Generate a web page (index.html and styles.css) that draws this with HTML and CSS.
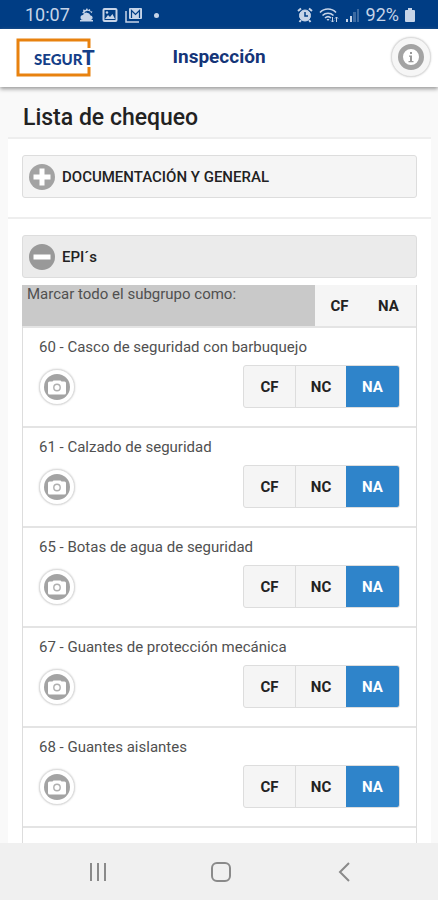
FILE: index.html
```html
<!DOCTYPE html>
<html lang="es">
<head>
<meta charset="utf-8">
<meta name="viewport" content="width=device-width, initial-scale=1">
<title>Inspección</title>
<link rel="stylesheet" href="styles.css">
</head>
<body>
<svg class="defs" aria-hidden="true">
  <symbol id="camera" viewBox="0 0 26 26">
    <circle cx="13" cy="13" r="13" fill="#a3a3a3"/>
    <path d="M5.500 7.500h3l1-1h7l1 1h3a1.500 1.500 0 0 1 1.500 1.500v10a1.500 1.500 0 0 1-1.500 1.500h-15A1.500 1.500 0 0 1 4 19V9a1.500 1.500 0 0 1 1.500-1.500z" fill="#fff"/>
    <circle cx="13" cy="13.500" r="3.200" fill="none" stroke="#b0b0b0" stroke-width="1.400"/>
  </symbol>
</svg>
<div class="status">
  <div class="status-group">
    <span class="clock">10:07</span>
    <svg width="16" height="16" viewBox="0 0 16 16" fill="#c6d4e8" aria-hidden="true">
      <path d="M8 1l1 2 2-1 .3 2.200 2.200.3-1 1.800A4 4 0 0 0 5 6.500L3 6l1.300-1.500L4 2.500l2.500.6z"/>
      <path d="M4 13a2.500 2.500 0 0 1 0-5 4 4 0 0 1 7.500.5A2.300 2.300 0 0 1 12 13z"/>
      <path d="M1 13h13v1.500H1z"/>
    </svg>
    <svg width="16" height="16" viewBox="0 0 16 16" aria-hidden="true">
      <rect x="1.500" y="2" width="13" height="12" rx="1" fill="none" stroke="#c6d4e8" stroke-width="2"/>
      <path d="M3 12l3-4 2 2 2.500-3L13 12z" fill="#c6d4e8"/><circle cx="5" cy="5.500" r="1.200" fill="#c6d4e8"/>
    </svg>
    <svg width="18" height="16" viewBox="0 0 18 16" fill="none" stroke="#c6d4e8" aria-hidden="true">
      <path d="M1 4v11h13" stroke-width="1.500"/>
      <rect x="4" y="1" width="13" height="11" rx="1" fill="#c6d4e8" stroke="none"/>
      <path d="M6.500 11V3.500l4 4 4-4V11" stroke="#003d84" stroke-width="1.200"/>
    </svg>
    <span class="dot"></span>
  </div>
  <div class="status-group status-right">
    <svg width="16" height="16" viewBox="0 0 16 16" fill="none" stroke="#c6d4e8" aria-hidden="true">
      <circle cx="8" cy="8.500" r="5.500" fill="#c6d4e8"/>
      <path d="M1 4l3-2.500M15 4l-3-2.500M4 13l-1.500 2M12 13l1.500 2" stroke-width="2"/>
      <path d="M8 5v4h3" stroke="#003d84" stroke-width="1.500"/>
    </svg>
    <svg width="20" height="16" viewBox="0 0 20 16" fill="none" stroke="#c6d4e8" stroke-width="1.600" aria-hidden="true">
      <path d="M1 5.500a11 11 0 0 1 16 0M3.500 8.500a8 8 0 0 1 11 0M6 11a4.500 4.500 0 0 1 6 0"/>
      <path d="M9 14l-1.500-2h3z" fill="#c6d4e8" stroke="none"/>
      <path d="M13.500 10v5M12 13.500l1.500 1.500 1.500-1.500M17.500 15v-5M16 11.500l1.500-1.500 1.500 1.500" stroke-width="1"/>
    </svg>
    <svg width="15" height="16" viewBox="0 0 15 16" fill="#c6d4e8" aria-hidden="true">
      <path d="M1 12h2v3H1zM5 9h2v6H5z"/><path d="M8 5h3v10H8zM12 2h2v13h-2z" opacity=".3"/>
    </svg>
    <span class="battery">92%</span>
    <svg width="10" height="16" viewBox="0 0 10 16" fill="#c6d4e8" aria-hidden="true">
      <path d="M3 1h4v2h2a1 1 0 0 1 1 1v10a1 1 0 0 1-1 1H1a1 1 0 0 1-1-1V4a1 1 0 0 1 1-1h2z"/>
    </svg>
  </div>
</div>

<header class="topbar">
  <a class="logo" href="#" aria-label="SEGURT">
    <svg width="80" height="40" viewBox="0 0 80 40">
      <path d="M73 11V3H2v35h71v-8" fill="none" stroke="#e8820f" stroke-width="3"/>
      <text class="logo-text" x="18" y="28">SEGUR</text>
      <text class="logo-t" x="66" y="28">T</text>
    </svg>
  </a>
  <h1 class="title">Inspección</h1>
  <button class="round info" type="button" aria-label="Información">
    <svg width="26" height="26" viewBox="0 0 26 26">
      <circle cx="13" cy="13" r="10.500" fill="#fff" stroke="#a3a3a3" stroke-width="5"/>
      <path d="M12 8h2v2h-2zM11 11.500h3v5.500h1.500v1.200h-5V17H12v-4.200h-1z" fill="#999"/>
    </svg>
  </button>
</header>

<main class="content">
  <h2 class="heading">Lista de chequeo</h2>
  <section class="group">
    <button class="toggle" type="button" aria-expanded="false">
      <svg width="26" height="26" viewBox="0 0 26 26" aria-hidden="true"><circle cx="13" cy="13" r="13" fill="#a3a3a3"/><path d="M10.500 4.500h5v6h6v5h-6v6h-5v-6h-6v-5h6z" fill="#fff"/></svg>
      DOCUMENTACIÓN Y GENERAL
    </button>
  </section>
  <section class="group">
    <button class="toggle open" type="button" aria-expanded="true">
      <svg width="26" height="26" viewBox="0 0 26 26" aria-hidden="true"><circle cx="13" cy="13" r="13" fill="#999"/><path d="M4.500 10.500h17v5h-17z" fill="#fff"/></svg>
      EPI´s
    </button>
    <div class="panel">
      <div class="mark-all">
        <p class="mark-label">Marcar todo el subgrupo como:</p>
        <div class="mark-options">
          <button type="button">CF</button>
          <button type="button">NA</button>
        </div>
      </div>
      <ul class="items">
        <li class="item">
          <p class="name">60 - Casco de seguridad con barbuquejo</p>
          <div class="actions">
            <button class="round" type="button" aria-label="Foto"><svg width="26" height="26"><use href="#camera"/></svg></button>
            <div class="choices"><button type="button">CF</button><button type="button">NC</button><button class="selected" type="button" aria-pressed="true">NA</button></div>
          </div>
        </li>
        <li class="item">
          <p class="name">61 - Calzado de seguridad</p>
          <div class="actions">
            <button class="round" type="button" aria-label="Foto"><svg width="26" height="26"><use href="#camera"/></svg></button>
            <div class="choices"><button type="button">CF</button><button type="button">NC</button><button class="selected" type="button" aria-pressed="true">NA</button></div>
          </div>
        </li>
        <li class="item">
          <p class="name">65 - Botas de agua de seguridad</p>
          <div class="actions">
            <button class="round" type="button" aria-label="Foto"><svg width="26" height="26"><use href="#camera"/></svg></button>
            <div class="choices"><button type="button">CF</button><button type="button">NC</button><button class="selected" type="button" aria-pressed="true">NA</button></div>
          </div>
        </li>
        <li class="item">
          <p class="name">67 - Guantes de protección mecánica</p>
          <div class="actions">
            <button class="round" type="button" aria-label="Foto"><svg width="26" height="26"><use href="#camera"/></svg></button>
            <div class="choices"><button type="button">CF</button><button type="button">NC</button><button class="selected" type="button" aria-pressed="true">NA</button></div>
          </div>
        </li>
        <li class="item">
          <p class="name">68 - Guantes aislantes</p>
          <div class="actions">
            <button class="round" type="button" aria-label="Foto"><svg width="26" height="26"><use href="#camera"/></svg></button>
            <div class="choices"><button type="button">CF</button><button type="button">NC</button><button class="selected" type="button" aria-pressed="true">NA</button></div>
          </div>
        </li>
      </ul>
    </div>
  </section>
</main>

<nav class="sysnav" aria-label="Sistema">
  <button type="button" aria-label="Recientes"><svg width="20" height="20" viewBox="0 0 20 20" stroke="#8a8a8a" stroke-width="2"><path d="M3 1v18M10 1v18M17 1v18"/></svg></button>
  <button type="button" aria-label="Inicio"><svg width="20" height="20" viewBox="0 0 20 20" fill="none" stroke="#8a8a8a" stroke-width="2"><rect x="1" y="1" width="18" height="18" rx="5"/></svg></button>
  <button type="button" aria-label="Atrás"><svg width="20" height="20" viewBox="0 0 20 20" fill="none" stroke="#8a8a8a" stroke-width="2"><path d="M15 1L6 10l9 9"/></svg></button>
</nav>
</body>
</html>
```
FILE: styles.css
```css
* { box-sizing: border-box; }

body {
  margin: 0;
  height: 100vh;
  display: flex;
  flex-direction: column;
  background: #f9f9f9;
  color: #505050;
  font-family: Roboto, "Liberation Sans", sans-serif;
  font-size: 15px;
  line-height: 20px;
}

h1, h2, p, ul { margin: 0; padding: 0; }
ul { list-style: none; }
svg { display: block; flex: none; }
.defs { position: absolute; width: 0; height: 0; }

button {
  padding: 0;
  border: 0;
  background: none;
  color: #222;
  font: inherit;
  font-weight: 700;
}

.status {
  flex: none;
  display: flex;
  justify-content: space-between;
  align-items: center;
  height: 29px;
  padding: 1px 23px 0 25px;
  background: #003d84;
  color: #c6d4e8;
  font-size: 18px;
}
.status-group { display: flex; align-items: center; gap: 7px; }
.status-right { gap: 6px; }
.clock { margin-right: 2px; }
.dot { width: 5px; height: 5px; margin-left: 4px; border-radius: 50%; background: #c6d4e8; }

.topbar {
  flex: none;
  position: relative;
  display: grid;
  grid-template-columns: 1fr auto 1fr;
  align-items: center;
  height: 58px;
  padding: 0 7px 2px;
  background: #fff;
  box-shadow: 0 2px 4px #999;
}
.logo { margin-left: 9px; }
.logo-text, .logo-t { fill: #153f88; font-family: Lato, sans-serif; font-weight: 900; }
.logo-text { font-size: 15px; }
.logo-t { font-size: 21px; }
.title { color: #153578; font-size: 19px; font-weight: 700; line-height: 24px; }

.round {
  display: grid;
  place-items: center;
  width: 36px;
  height: 36px;
  border: 1px solid #ddd;
  border-radius: 50%;
  background: #fff;
  box-shadow: 0 0 2px #ccc;
}
.info { justify-self: end; width: 40px; height: 40px; background: #f6f6f6; }

.content {
  flex: 1;
  min-height: 0;
  padding: 0 7px 0 8px;
  overflow: hidden auto;
  scrollbar-width: none;
}
.heading {
  padding: 17px 15px 5px;
  color: #222;
  font-size: 23px;
  font-weight: 500;
  line-height: 28px;
}
.group {
  padding: 16px 14px 19px;
  border-top: 2px solid #eee;
  background: #fff;
}

.toggle {
  display: flex;
  align-items: center;
  gap: 7px;
  width: 100%;
  height: 43px;
  padding: 0 6px;
  border: 1px solid #ddd;
  border-radius: 3px;
  background: #f5f5f5;
  font-weight: 500;
}
.open { background: #ebebeb; }

.panel { margin-top: 7px; }
.mark-all { display: flex; border-right: 1px solid #ddd; }
.mark-label { flex: 1; padding: 0 5px; background: #c9c9c9; line-height: 18px; }
.mark-options { display: flex; padding-right: 3px; background: #f5f5f5; }
.mark-options button { width: 49px; height: 41px; }

.items { padding-bottom: 20px; border: 1px solid #ddd; border-width: 0 1px; }
.item { padding: 9px 16px 18px; border-top: 2px solid #e4e4e4; }
.item:last-child { border-bottom: 2px solid #e4e4e4; }
.name { margin-bottom: 8px; }
.actions { display: flex; justify-content: space-between; align-items: center; }

.choices {
  display: flex;
  border: 1px solid #ddd;
  border-radius: 3px;
  background: #f5f5f5;
  overflow: hidden;
}
.choices button { width: 51px; height: 41px; border-left: 1px solid #ddd; }
.choices button:first-child { border-left: 0; }
.choices .selected { width: 53px; border-left: 0; background: #2f84ca; color: #fff; }

.sysnav {
  flex: none;
  display: flex;
  justify-content: space-around;
  align-items: center;
  height: 57px;
  padding: 0 33px 0 37px;
  background: #f0f0f0;
}
.sysnav button { padding: 8px; }
```
